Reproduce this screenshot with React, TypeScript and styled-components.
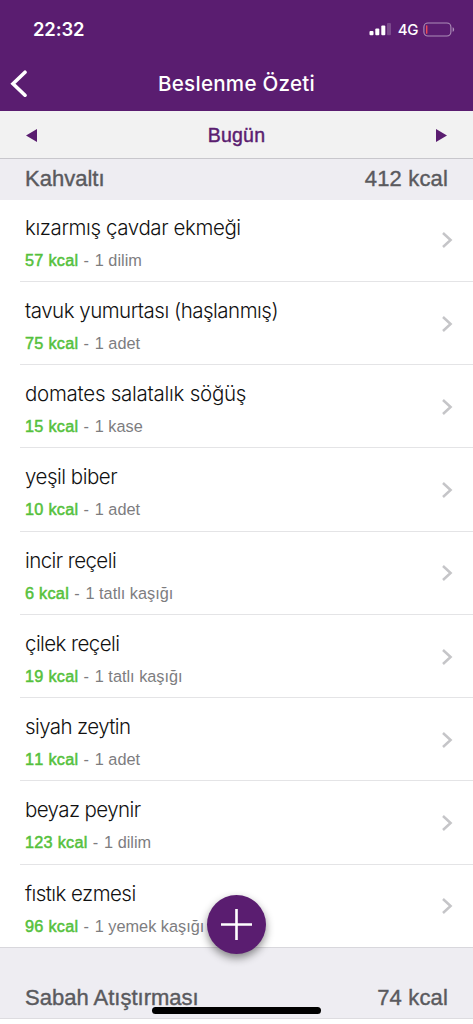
import React from "react";
import styled, { createGlobalStyle } from "styled-components";

const purple = "#5a1d70";

const GlobalStyle = createGlobalStyle`
  * { box-sizing: border-box; }
  html, body { margin: 0; padding: 0; }
  body { background: #fff; font-family: "Liberation Sans", Arial, sans-serif; overflow: hidden; }
`;

const Screen = styled.div`
  position: relative;
  width: 473px;
  height: 1024px;
  overflow: hidden;
  background: #fff;
  display: flex;
  flex-direction: column;
`;

const Header = styled.header`
  flex: none;
  height: 111px;
  background: ${purple};
  color: #fff;
  font-family: Inter, sans-serif;
`;

const StatusBar = styled.div`
  height: 56px;
  padding: 2px 18px 0 33px;
  display: flex;
  align-items: center;
  justify-content: space-between;
`;

const Clock = styled.span`
  font-size: 18.4px;
  font-weight: 600;
  letter-spacing: -0.1px;
`;

const StatusIcons = styled.div`
  display: flex;
  align-items: center;
`;

const Network = styled.span`
  margin: 0 5px 0 7px;
  font-size: 15px;
  font-weight: 500;
  letter-spacing: -0.4px;
`;

const NavBar = styled.div`
  height: 55px;
  padding: 0 10px;
  display: grid;
  grid-template-columns: 20px 1fr 20px;
  align-items: center;
`;

const Title = styled.h1`
  margin: 0;
  text-align: center;
  font-size: 20.6px;
  font-weight: 550;
  letter-spacing: 0.25px;
`;

const DayBar = styled.div`
  flex: none;
  height: 48px;
  padding: 1px 26px 0;
  display: flex;
  align-items: center;
  justify-content: space-between;
  background: #f2f2f2;
  border-bottom: 1px solid #c8c7cc;
  color: ${purple};
`;

const Day = styled.span`
  font-size: 19.5px;
  letter-spacing: 0.2px;
  -webkit-text-stroke: 0.45px ${purple};
`;

const SectionHeader = styled.div<{ $tall?: boolean }>`
  flex: none;
  position: relative;
  height: ${(p) => (p.$tall ? "71px" : "41px")};
  margin-bottom: ${(p) => (p.$tall ? "0" : "-1.45px")};
  padding: ${(p) => (p.$tall ? "31px 25px 0" : "0 25px 1px")};
  display: flex;
  align-items: center;
  justify-content: space-between;
  background: #eeedf2;
  border-bottom: ${(p) => (p.$tall ? "1px solid #dddce0" : "0")};
  color: #5a5a5e;
  font-size: 22px;
  -webkit-text-stroke: 0.4px #5a5a5e;
`;

const SectionTotal = styled.span`
  letter-spacing: 0.15px;
`;

const Row = styled.div<{ $last?: boolean }>`
  flex: none;
  height: 83.25px;
  margin-left: ${(p) => (p.$last ? 0 : 20)}px;
  padding: 15.1px 20px 0 ${(p) => (p.$last ? 25 : 5)}px;
  display: flex;
  justify-content: space-between;
  border-bottom: 1px solid ${(p) => (p.$last ? "#d8d7dc" : "#e4e4e6")};
`;

const FoodName = styled.div<{ $spacing: number }>`
  height: 28px;
  line-height: 28px;
  font-family: Inter, sans-serif;
  font-size: 20.5px;
  font-weight: 300;
  letter-spacing: ${(p) => p.$spacing}px;
  color: #111;
  white-space: nowrap;
`;

const Detail = styled.div`
  height: 20px;
  margin-top: 8px;
  line-height: 20px;
  font-size: 16.3px;
  font-kerning: none;
  color: #7d7d7f;
  white-space: nowrap;
`;

const Calories = styled.span`
  letter-spacing: 0.25px;
  color: #55c13c;
  -webkit-text-stroke: 0.5px #55c13c;
`;

const Dash = styled.span`
  letter-spacing: 0.65px;
  white-space: pre;
`;

const RowArrow = styled.svg`
  flex: none;
  margin-top: 17.6px;
`;

const AddButton = styled.button`
  position: absolute;
  left: 207px;
  top: 895px;
  width: 59px;
  height: 59px;
  padding: 0;
  border: 0;
  border-radius: 50%;
  display: grid;
  place-items: center;
  background: ${purple};
  box-shadow: 0 4px 9px rgba(0, 0, 0, 0.45);
`;

const HomeIndicator = styled.div`
  position: absolute;
  left: 152px;
  top: 1007px;
  width: 169px;
  height: 7px;
  border-radius: 4px;
  background: #000;
`;

const foods = [
  { name: "kızarmış çavdar ekmeği", kcal: 57, amount: "1 dilim", spacing: -0.4 },
  { name: "tavuk yumurtası (haşlanmış)", kcal: 75, amount: "1 adet", spacing: -0.5 },
  { name: "domates salatalık söğüş", kcal: 15, amount: "1 kase", spacing: -0.26 },
  { name: "yeşil biber", kcal: 10, amount: "1 adet", spacing: -0.5 },
  { name: "incir reçeli", kcal: 6, amount: "1 tatlı kaşığı", spacing: -0.58 },
  { name: "çilek reçeli", kcal: 19, amount: "1 tatlı kaşığı", spacing: -0.58 },
  { name: "siyah zeytin", kcal: 11, amount: "1 adet", spacing: -0.6 },
  { name: "beyaz peynir", kcal: 123, amount: "1 dilim", spacing: -0.6 },
  { name: "fıstık ezmesi", kcal: 96, amount: "1 yemek kaşığı", spacing: -0.55 },
];

export default function App() {
  return (
    <>
      <GlobalStyle />
      <Screen>
        <Header>
          <StatusBar>
            <Clock>22:32</Clock>
            <StatusIcons>
              <svg width="22" height="14" viewBox="0 0 22 14" fill="#fff">
                <rect x="0.5" y="9" width="4" height="4.3" rx="1" />
                <rect x="6.3" y="6.5" width="4" height="6.8" rx="1" />
                <rect x="12.3" y="3.5" width="4" height="9.8" rx="1" />
                <rect x="18" y="1" width="4" height="12.3" rx="1" opacity="0.2" />
              </svg>
              <Network>4G</Network>
              <svg width="32" height="15" viewBox="0 0 32 15" fill="none">
                <rect x="0.9" y="1" width="27" height="13" rx="4" stroke="#fff" strokeOpacity="0.5" strokeWidth="1.1" />
                <path d="M29.6 5.2c2 .7 2 3.9 0 4.6z" fill="#fff" fillOpacity="0.5" />
                <rect x="3" y="3.2" width="1.4" height="8.6" rx="0.6" fill="#ed4b55" />
              </svg>
            </StatusIcons>
          </StatusBar>
          <NavBar>
            <svg width="18" height="28" viewBox="0 0 18 28" fill="none">
              <path d="M15 2.2L3 13.7l12 11.5" stroke="#fff" strokeWidth="3.6" strokeLinecap="round" strokeLinejoin="miter" />
            </svg>
            <Title>Beslenme Özeti</Title>
          </NavBar>
        </Header>
        <DayBar>
          <svg width="11" height="13" viewBox="0 0 11 13" fill={purple}>
            <path d="M11 0v13L0 6.5z" />
          </svg>
          <Day>Bugün</Day>
          <svg width="11" height="13" viewBox="0 0 11 13" fill={purple}>
            <path d="M0 0v13l11-6.5z" />
          </svg>
        </DayBar>
        <SectionHeader>
          <span>Kahvaltı</span>
          <SectionTotal>412 kcal</SectionTotal>
        </SectionHeader>
        {foods.map((food, i) => (
          <Row key={food.name} $last={i === foods.length - 1}>
            <div>
              <FoodName $spacing={food.spacing}>{food.name}</FoodName>
              <Detail>
                <Calories>{food.kcal} kcal</Calories>
                <Dash>{" - "}</Dash>
                {food.amount}
              </Detail>
            </div>
            <RowArrow width="12" height="18" viewBox="0 0 12 18" fill="none">
              <path d="M2 2l7.6 7L2 16" stroke="#c5c5c8" strokeWidth="2.5" />
            </RowArrow>
          </Row>
        ))}
        <SectionHeader $tall>
          <span>Sabah Atıştırması</span>
          <SectionTotal>74 kcal</SectionTotal>
        </SectionHeader>
        <AddButton aria-label="Ekle">
          <svg width="31" height="31" viewBox="0 0 31 31" stroke="#fff" strokeWidth="2.6">
            <path d="M15.5 0v31M0 15.5h31" />
          </svg>
        </AddButton>
        <HomeIndicator />
      </Screen>
    </>
  );
}
